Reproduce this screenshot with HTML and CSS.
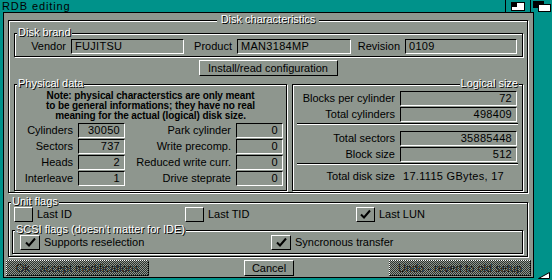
FILE: index.html
```html
<!DOCTYPE html>
<html>
<head>
<meta charset="utf-8">
<link rel="stylesheet" href="styles.css">
</head>
<body>
<div class="window">
  <div class="titlebar">
    <span class="wtitle">RDB editing</span>
    <div class="tgad tgad-zoom">
      <svg width="24" height="12" viewBox="0 0 24 12"><rect x="5.5" y="2.5" width="13" height="8" fill="#fff" stroke="#000"/><rect x="6" y="3" width="5" height="4" fill="#000"/></svg>
    </div>
    <div class="tgad tgad-depth">
      <svg width="21" height="12" viewBox="0 0 21 12"><rect x="2.5" y="1.5" width="10" height="6" fill="#000" stroke="#000"/><rect x="7.5" y="4.5" width="12" height="7" fill="#fff" stroke="#000"/></svg>
    </div>
  </div>
  <div class="main">
    <div class="lborder"></div>
    <div class="content">
      <div class="group outer">
        <div class="gtitle center"><span>Disk characteristics</span></div>
        <div class="group brand">
          <div class="gtitle"><span>Disk brand</span></div>
          <div class="brand-grid">
            <span class="lbl">Vendor</span><div class="field">FUJITSU</div>
            <span class="lbl">Product</span><div class="field">MAN3184MP</div>
            <span class="lbl">Revision</span><div class="field">0109</div>
          </div>
        </div>
        <div class="btn install">Install/read configuration</div>
        <div class="cols">
          <div class="group phys">
            <div class="gtitle"><span>Physical data</span></div>
            <div class="note">Note: physical characterstics are only meant<br>to be general informations; they have no real<br>meaning for the actual (logical) disk size.</div>
            <div class="phys-grid">
              <span class="lbl">Cylinders</span><div class="field num">30050</div>
              <span class="lbl">Park cylinder</span><div class="field num">0</div>
              <span class="lbl">Sectors</span><div class="field num">737</div>
              <span class="lbl">Write precomp.</span><div class="field num">0</div>
              <span class="lbl">Heads</span><div class="field num">2</div>
              <span class="lbl">Reduced write curr.</span><div class="field num">0</div>
              <span class="lbl">Interleave</span><div class="field num">1</div>
              <span class="lbl">Drive steprate</span><div class="field num">0</div>
            </div>
          </div>
          <div class="group logic">
            <div class="gtitle right"><span>Logical size</span></div>
            <div class="lg-grid first">
              <span class="lbl">Blocks per cylinder</span><div class="field num">72</div>
              <span class="lbl">Total cylinders</span><div class="field num">498409</div>
            </div>
            <div class="sep"></div>
            <div class="lg-grid second">
              <span class="lbl">Total sectors</span><div class="field num">35885448</div>
              <span class="lbl">Block size</span><div class="field num">512</div>
            </div>
            <div class="sep"></div>
            <div class="lg-grid third">
              <span class="lbl">Total disk size</span><div class="val">17.1115 GBytes, 17</div>
            </div>
          </div>
        </div>
      </div>
      <div class="group unit">
        <div class="gtitle"><span>Unit flags</span></div>
        <div class="unit-row">
          <div class="chk"><span class="cb"></span><span>Last ID</span></div>
          <div class="chk"><span class="cb"></span><span>Last TID</span></div>
          <div class="chk"><span class="cb"><svg width="17" height="13" viewBox="0 0 17 13"><path d="M4 6.5 L7 9.5 L13 2.5" fill="none" stroke="#000" stroke-width="2"/></svg></span><span>Last LUN</span></div>
        </div>
        <div class="group scsi">
          <div class="gtitle"><span>SCSI flags (doesn't matter for IDE)</span></div>
          <div class="scsi-row">
            <div class="chk"><span class="cb wide"><svg width="17" height="13" viewBox="0 0 17 13"><path d="M4 6.5 L7 9.5 L13 2.5" fill="none" stroke="#000" stroke-width="2"/></svg></span><span>Supports reselection</span></div>
            <div class="chk"><span class="cb wide"><svg width="17" height="13" viewBox="0 0 17 13"><path d="M4 6.5 L7 9.5 L13 2.5" fill="none" stroke="#000" stroke-width="2"/></svg></span><span>Syncronous transfer</span></div>
          </div>
        </div>
      </div>
      <div class="buttons">
        <div class="btn ghost ok">Ok - accept modifications</div>
        <div class="btn cancel">Cancel</div>
        <div class="btn ghost undo">Undo - revert to old setup</div>
      </div>
    </div>
    <div class="rborder">
      <div class="sizegad">
        <svg width="16" height="9" viewBox="0 0 16 9"><path d="M2.5 7.5 L13.5 1.5 L13.5 7.5 Z" fill="#fff" stroke="#000"/></svg>
      </div>
    </div>
  </div>
</div>
</body>
</html>
```
FILE: styles.css
```css
html, body {
  margin: 0;
  padding: 0;
}
body {
  width: 552px;
  height: 280px;
  overflow: hidden;
  background: #00928a;
  font-family: "Liberation Sans", Arial, sans-serif;
  font-size: 11px;
  color: #000;
}
.window {
  width: 552px;
  height: 280px;
  display: flex;
  flex-direction: column;
  background: #00928a;
}
.titlebar {
  height: 12px;
  display: flex;
  align-items: stretch;
  line-height: 12px;
}
.wtitle {
  padding-left: 2px;
  letter-spacing: 0.9px;
  color: #000;
}
.tgad {
  box-sizing: border-box;
  border-left: 1px solid #000;
  display: flex;
  align-items: center;
}
.tgad-zoom {
  margin-left: auto;
  width: 25px;
}
.tgad-depth {
  width: 22px;
}
.main {
  flex: 1;
  display: flex;
}
.lborder {
  width: 3px;
}
.content {
  box-sizing: border-box;
  width: 531px;
  height: 266px;
  border: 1px solid #000;
  background: #8e968e;
  display: flex;
  flex-direction: column;
}
.rborder {
  flex: 1;
  display: flex;
  flex-direction: column;
  justify-content: flex-end;
}
.sizegad {
  height: 9px;
  margin-left: 2px;
  display: flex;
}

/* frames */
.group {
  position: relative;
  box-sizing: border-box;
  border: 1px solid #000;
  box-shadow: 1px 1px 0 #fff, inset 1px 1px 0 #fff;
}
.gtitle {
  position: absolute;
  top: -7px;
  left: 2px;
  height: 11px;
  line-height: 11px;
  color: #fff;
  text-shadow: 1px 1px 0 #000;
  white-space: nowrap;
  z-index: 1;
}
.gtitle span {
  background: #8e968e;
  padding: 0 1px;
  display: inline-block;
  height: 11px;
}
.gtitle.center {
  left: 0;
  right: 0;
  text-align: center;
}
.gtitle.center span {
  padding: 0 4px;
}
.gtitle.right {
  left: auto;
  right: 3px;
}

.outer {
  margin: 7px 0 0 4px;
  width: 520px;
  height: 173px;
  display: flex;
  flex-direction: column;
}
.brand {
  margin: 12px 0 0 5px;
  width: 509px;
  height: 24px;
  flex: none;
}
.lbl {
  text-align: right;
  white-space: nowrap;
  line-height: 15px;
  height: 15px;
}
.field {
  box-sizing: border-box;
  height: 15px;
  border: 1px solid;
  border-color: #000 #fff #fff #000;
  line-height: 13px;
  padding: 0 3px;
  letter-spacing: 0.3px;
  white-space: nowrap;
  overflow: hidden;
}
.field.num {
  text-align: right;
  padding-right: 4px;
}
.brand-grid {
  margin-top: 5px;
  display: grid;
  grid-template-columns: 51px 113px 43px 114px 44px 112px;
  column-gap: 5px;
}
.btn {
  box-sizing: border-box;
  height: 16px;
  border: 1px solid;
  border-color: #fff #000 #000 #fff;
  line-height: 14px;
  text-align: center;
  white-space: nowrap;
  position: relative;
  flex: none;
}
.install {
  margin-top: 3px;
  width: 139px;
  align-self: center;
}
.cols {
  margin: 8px 0 0 5px;
  display: flex;
  gap: 5px;
  flex: none;
}
.phys {
  width: 273px;
  height: 107px;
}
.logic {
  width: 231px;
  height: 107px;
}
.note {
  margin-top: 6px;
  font-weight: bold;
  font-size: 10px;
  line-height: 10px;
  text-align: center;
  letter-spacing: -0.1px;
  white-space: nowrap;
}
.phys-grid {
  margin-top: 2px;
  display: grid;
  grid-template-columns: 58px 47px 101px 47px;
  grid-auto-rows: 15px;
  column-gap: 5px;
  row-gap: 1px;
}
.lg-grid {
  display: grid;
  grid-template-columns: 102px 117px;
  grid-auto-rows: 15px;
  column-gap: 5px;
  row-gap: 1px;
}
.lg-grid.first {
  margin-top: 6px;
}
.lg-grid.second {
  margin-top: 6px;
}
.lg-grid.third {
  margin-top: 4px;
}
.val {
  line-height: 15px;
  padding-left: 3px;
  white-space: nowrap;
  overflow: hidden;
  letter-spacing: 0.3px;
}
.sep {
  margin: 1px 0 0 4px;
  width: 221px;
  height: 0;
  border-top: 1px solid #000;
  border-bottom: 1px solid #fff;
}

.unit {
  margin: 9px 0 0 4px;
  width: 520px;
  height: 55px;
  flex: none;
}
.unit-row {
  margin: 4px 0 0 5px;
  display: grid;
  grid-template-columns: 1fr 1fr 1fr;
}
.chk {
  display: flex;
  align-items: center;
  gap: 4px;
  height: 15px;
  line-height: 15px;
  white-space: nowrap;
}
.cb {
  box-sizing: border-box;
  width: 19px;
  height: 15px;
  border: 1px solid;
  border-color: #fff #000 #000 #fff;
  display: flex;
  align-items: center;
  justify-content: center;
}
.cb.wide {
  width: 20px;
}
.scsi {
  margin: 8px 0 0 3px;
  width: 511px;
  height: 24px;
}
.scsi-row {
  margin: 4px 0 0 7px;
  display: grid;
  grid-template-columns: 251px 1fr;
}
.buttons {
  margin-top: 3px;
  padding: 0 2px;
  display: flex;
  justify-content: space-between;
}
.ok {
  width: 143px;
}
.cancel {
  width: 50px;
}
.undo {
  width: 142px;
}
.ghost::after {
  content: "";
  position: absolute;
  inset: -1px;
  background: repeating-conic-gradient(#2e322e 0 25%, transparent 0 50%);
  background-size: 2px 2px;
}
```
